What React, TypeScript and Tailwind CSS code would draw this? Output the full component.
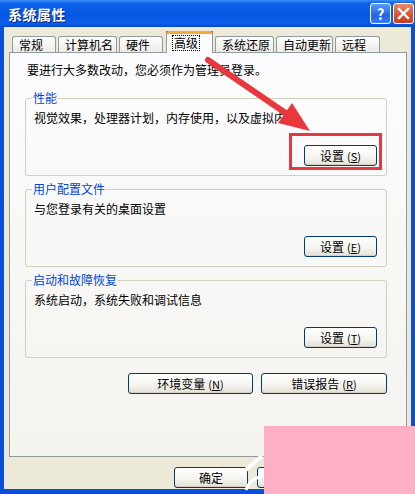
import type { ReactNode } from "react";

const FONT = "font-['Noto_Sans_CJK_SC','Liberation_Sans',sans-serif]";

type Tab = { label: string; w: string; selected?: boolean };

const tabs: Tab[] = [
  { label: "常规", w: "w-[44px]" },
  { label: "计算机名", w: "w-[59px]" },
  { label: "硬件", w: "w-[44px]" },
  { label: "高级", w: "w-[47px]", selected: true },
  { label: "系统还原", w: "w-[59px]" },
  { label: "自动更新", w: "w-[57px]" },
  { label: "远程", w: "w-[45px]" },
];

function XpButton({ children, className }: { children: ReactNode; className?: string }) {
  return (
    <button
      className={
        "flex h-[21px] items-center justify-center rounded-[3px] border border-[#003c74] bg-[linear-gradient(180deg,#ffffff_0%,#f4f3ee_60%,#e3e0d5_100%)] text-[12px] leading-[14px] text-black shadow-[inset_0_-1px_0_#d6d0c5] " +
        (className ?? "")
      }
    >
      {children}
    </button>
  );
}

function Key({ k }: { k: string }) {
  return (
    <span className="ml-[3px] text-[11px]">
      (<span className="underline">{k}</span>)
    </span>
  );
}

function Group({ title, desc, k }: { title: string; desc: string; k: string }) {
  return (
    <fieldset className="w-[362px] rounded-[3px] border border-[#d0d0bf] pl-[6px] pr-[9px] pb-[9px] pt-[6px]">
      <legend className="px-[1px] text-[12px] leading-[14px] text-[#0046d5]">{title}</legend>
      <p className="pl-[2px] text-[12px] leading-[14px] text-black">{desc}</p>
      <div className="mt-[20px] flex justify-end">
        <XpButton className="w-[73px]">
          设置
          <Key k={k} />
        </XpButton>
      </div>
    </fieldset>
  );
}

export default function App() {
  return (
    <div className={"relative h-[494px] w-[415px] overflow-hidden bg-[#0a4fd8] " + FONT}>
      {/* title bar */}
      <div className="flex h-[27px] items-center justify-between bg-[linear-gradient(180deg,#3f8ef5_0%,#0c62ea_12%,#0857e4_55%,#0a5ee9_88%,#0546c9_100%)] pl-[8px] pr-[1px]">
        <span className="text-[14px] font-bold leading-[16px] tracking-[0.5px] text-white [text-shadow:1px_1px_0_#0a1f6e]">
          系统属性
        </span>
        <div className="flex gap-[2px]">
          <div className="flex h-[21px] w-[21px] items-center justify-center rounded-[3px] border border-white bg-[linear-gradient(180deg,#5a9af9,#2463e6_60%,#3a7df4)] text-[15px] font-bold leading-none text-white">
            ?
          </div>
          <div className="flex h-[21px] w-[21px] items-center justify-center rounded-[3px] border border-white bg-[linear-gradient(180deg,#e88a6a,#d9502c_60%,#c5401f)]">
            <svg width="13" height="13" viewBox="0 0 13 13">
              <path d="M2 2 L11 11 M11 2 L2 11" stroke="white" strokeWidth="2.4" strokeLinecap="square" />
            </svg>
          </div>
        </div>
      </div>

      {/* body */}
      <div className="mx-[4px] flex h-[462px] flex-col bg-[#ece9d8] pt-[4px]">
        <div className="relative z-10 -mb-[1px] flex h-[22px] items-end gap-[2px] pl-[8px]">
          {tabs.map((t) =>
            t.selected ? (
              <div
                key={t.label}
                className={
                  t.w +
                  " ml-[1px] flex h-[22px] items-start rounded-t-[3px] border-x border-t-[3px] border-x-[#919b9c] border-t-[#f3a93b] bg-[#fcfcfe] pl-[5px] pt-[1px] text-[12px] leading-[14px]"
                }
              >
                <span className="block border border-dotted border-black px-[1px] text-black">
                  {t.label}
                </span>
              </div>
            ) : (
              <div
                key={t.label}
                className={
                  t.w +
                  " mb-[1px] h-[16px] rounded-t-[3px] border-x border-t border-[#919b9c] bg-[linear-gradient(180deg,#ffffff,#ecebe5)] pl-[6px] text-[12px] leading-[15px] text-black"
                }
              >
                {t.label}
              </div>
            ),
          )}
        </div>

        <div className="ml-[5px] h-[405px] w-[398px] border border-[#919b9c] bg-[linear-gradient(180deg,#fcfcfe,#f4f3ee)] pt-[10px]">
          <p className="ml-[17px] text-[12px] leading-[14px] text-black">
            要进行大多数改动，您必须作为管理员登录。
          </p>
          <div className="ml-[15px] mt-[14px] flex flex-col gap-[6px]">
            <Group title="性能" desc="视觉效果，处理器计划，内存使用，以及虚拟内存" k="S" />
            <Group title="用户配置文件" desc="与您登录有关的桌面设置" k="E" />
            <Group title="启动和故障恢复" desc="系统启动，系统失败和调试信息" k="T" />
          </div>
          <div className="ml-[15px] mt-[15px] flex w-[362px] justify-end gap-[8px]">
            <XpButton className="w-[125px]">
              环境变量
              <Key k="N" />
            </XpButton>
            <XpButton className="w-[126px]">
              错误报告
              <Key k="R" />
            </XpButton>
          </div>
        </div>

        <div className="mt-[10px] flex gap-[9px] pl-[170px]">
          <XpButton className="h-[19px] w-[74px]">确定</XpButton>
          <XpButton className="h-[19px] w-[74px]">取消</XpButton>
        </div>
      </div>

      {/* annotations */}
      <svg className="pointer-events-none absolute left-0 top-0" width="415" height="494" viewBox="0 0 415 494">
        <rect x="167.5" y="32.5" width="44" height="19" fill="none" stroke="#e23a3e" strokeWidth="3" />
        <rect x="290.5" y="134.5" width="90" height="34" fill="none" stroke="#e23a3e" strokeWidth="3" />
        <path d="M208 60 L287 114" stroke="#e8383d" strokeWidth="6" strokeLinecap="round" />
        <polygon points="310,131 278,123 292,103" fill="#e8383d" />
      </svg>

      {/* watermark */}
      <div className="absolute left-[264px] top-[426px] h-[68px] w-[151px] bg-[#fdafc6]" />
      <svg className="pointer-events-none absolute left-[238px] top-[452px]" width="28" height="40" viewBox="0 0 28 40">
        <path d="M3 22 L24 4" stroke="white" strokeWidth="4" fill="none" />
        <path d="M8 38 Q12 26 26 24" stroke="white" strokeWidth="3" fill="none" />
      </svg>
    </div>
  );
}
